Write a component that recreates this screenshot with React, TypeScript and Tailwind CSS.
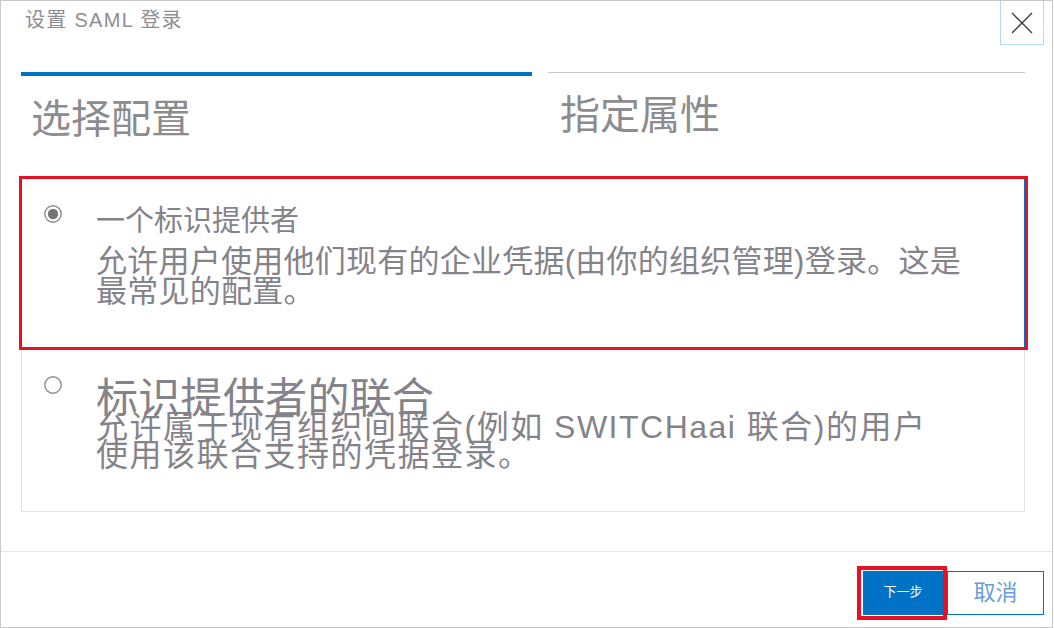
import React from 'react';

const font = { fontFamily: '"Liberation Sans", "Noto Sans CJK SC", sans-serif' };

const Radio = ({ checked }: { checked: boolean }) => (
  <svg width="18" height="18" viewBox="0 0 18 18" className="shrink-0">
    <circle cx="9" cy="9" r="8.2" fill="white" stroke="#8c8c8c" strokeWidth="1.4" />
    {checked && <circle cx="9" cy="9" r="5.2" fill="#767676" />}
  </svg>
);

const App = () => {
  return (
    <div
      className="w-[1053px] h-[628px] border border-[#c8c8c8] bg-white flex flex-col text-[#85838a]"
      style={font}
    >
      {/* Header */}
      <div className="flex justify-between h-[71px]">
        <div className="pl-[24px] pt-[6px] text-[20px] leading-[26px] tracking-[1.3px] text-[#8e8e92]">
          设置 SAML 登录
        </div>
        <button className="w-[44px] h-[44px] mr-[8px] border-x border-b border-[#b5dbf4] flex items-center justify-center bg-white">
          <svg width="22" height="22" viewBox="0 0 22 22">
            <path d="M1 1 L21 21 M21 1 L1 21" stroke="#3a3a3a" strokeWidth="1.3" fill="none" />
          </svg>
        </button>
      </div>

      {/* Tabs */}
      <div className="flex gap-[16px] px-[20px] h-[106px]">
        <div className="w-[511px] border-t-4 border-[#0072c6] pt-[23px] pl-[10px]">
          <div className="text-[40px] leading-[40px] text-[#8c8c8e]">选择配置</div>
        </div>
        <div className="w-[477px] border-t border-[#c8c8c8] pt-[22px] pl-[12px]">
          <div className="text-[40px] leading-[40px] text-[#8c8c8e]">指定属性</div>
        </div>
      </div>

      {/* Options */}
      <div className="mx-[20px] w-[1004px]">
        <div className="relative h-[170px] border border-[#0072c6] flex items-start pl-[22px] pt-[26px]">
          <Radio checked />
          <div className="ml-[34px] mt-[1px]">
            <div className="text-[29px] leading-[30px]">一个标识提供者</div>
            <div className="mt-[11px] text-[31px] leading-[30px] tracking-[0.25px] whitespace-nowrap">
              <div>允许用户使用他们现有的企业凭据(由你的组织管理)登录。这是</div>
              <div>最常见的配置。</div>
            </div>
          </div>
          <div className="absolute -left-[3px] -right-[4px] -top-[3px] -bottom-[3px] border-[3px] border-[#e81123] pointer-events-none" />
        </div>
        <div className="h-[164px] border-x border-b border-[#e3e3e3] flex items-start pl-[22px] pt-[28px]">
          <Radio checked={false} />
          <div className="ml-[34px] mt-[2px]">
            <div className="text-[42px] leading-[42px] tracking-[0.3px]">标识提供者的联合</div>
            <div className="-mt-[7px] text-[32px] leading-[28px] tracking-[1.5px] whitespace-nowrap">
              <div>允许属于现有组织间联合(例如 SWITCHaai 联合)的用户</div>
              <div>使用该联合支持的凭据登录。</div>
            </div>
          </div>
        </div>
      </div>

      {/* Footer */}
      <div className="mt-auto h-[76px] border-t border-[#e6e6e6] flex justify-end items-start pt-[19px] pr-[8px] gap-[4px]">
        <div className="relative">
          <button className="w-[80px] h-[44px] bg-[#0072c6] text-white text-[13px] leading-[13px] pb-[4px]">
            下一步
          </button>
          <div className="absolute -left-[6px] -right-[4px] -top-[5px] -bottom-[5px] border-[4px] border-[#e81123] pointer-events-none" />
        </div>
        <button className="w-[97px] h-[44px] border border-[#0072c6] bg-white text-[#6a9fd6] text-[22px] leading-[22px]">
          取消
        </button>
      </div>
    </div>
  );
};

export default App;
